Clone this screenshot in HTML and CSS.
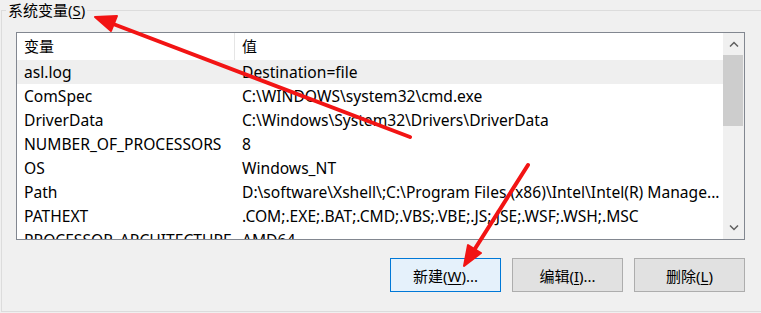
FILE: index.html
```html
<!DOCTYPE html>
<html lang="zh-CN">

<head>
	<meta charset="UTF-8">
	<title>环境变量</title>
	<link rel="stylesheet" href="styles.css">
</head>

<body>
	<fieldset class="group">
		<legend class="group-title">系统变量(<u>S</u>)</legend>
		<div class="listbox">
			<div class="list">
				<div class="row head">
					<div class="col name">变量</div>
					<div class="col value">值</div>
				</div>
				<div class="row selected">
					<div class="col name">asl.log</div>
					<div class="col value">Destination=file</div>
				</div>
				<div class="row">
					<div class="col name">ComSpec</div>
					<div class="col value">C:\WINDOWS\system32\cmd.exe</div>
				</div>
				<div class="row">
					<div class="col name">DriverData</div>
					<div class="col value">C:\Windows\System32\Drivers\DriverData</div>
				</div>
				<div class="row">
					<div class="col name">NUMBER_OF_PROCESSORS</div>
					<div class="col value">8</div>
				</div>
				<div class="row">
					<div class="col name">OS</div>
					<div class="col value">Windows_NT</div>
				</div>
				<div class="row">
					<div class="col name">Path</div>
					<div class="col value">D:\software\Xshell\;C:\Program Files (x86)\Intel\Intel(R) Manage...</div>
				</div>
				<div class="row">
					<div class="col name">PATHEXT</div>
					<div class="col value">.COM;.EXE;.BAT;.CMD;.VBS;.VBE;.JS;.JSE;.WSF;.WSH;.MSC</div>
				</div>
				<div class="row">
					<div class="col name">PROCESSOR_ARCHITECTURE</div>
					<div class="col value">AMD64</div>
				</div>
			</div>
			<div class="scrollbar">
				<div class="scroll-btn">
					<svg width="10" height="6" viewBox="0 0 10 6"><path d="M1 5.5 L5 1.5 L9 5.5" fill="none" stroke="#606060" stroke-width="1.5"/></svg>
				</div>
				<div class="track">
					<div class="thumb"></div>
				</div>
				<div class="scroll-btn">
					<svg width="10" height="6" viewBox="0 0 10 6"><path d="M1 0.5 L5 4.5 L9 0.5" fill="none" stroke="#606060" stroke-width="1.5"/></svg>
				</div>
			</div>
		</div>
		<div class="buttons">
			<button class="btn default">新建(<u>W</u>)...</button>
			<button class="btn">编辑(<u>I</u>)...</button>
			<button class="btn">删除(<u>L</u>)</button>
		</div>
	</fieldset>

	<!-- red markup arrows drawn over the screenshot -->
	<svg class="marks" width="761" height="313" viewBox="0 0 761 313">
		<g stroke="#f21414" stroke-width="4" stroke-linecap="round" fill="#f21414">
			<line x1="410" y1="137" x2="108" y2="22"/>
			<polygon points="95,17 117,16 111,31" stroke-width="2" stroke-linejoin="round"/>
			<line x1="528" y1="165" x2="471" y2="255"/>
			<polygon points="464,266 481,253 468,245" stroke-width="2" stroke-linejoin="round"/>
		</g>
	</svg>
</body>

</html>
```

FILE: styles.css
```css
body {
	margin: 0;
	width: 761px;
	height: 313px;
	overflow: hidden;
	background-color: #f0f0f0;
	font-family: "Noto Sans", "Noto Sans CJK SC", sans-serif;
	font-size: 15px;
	color: #000;
	position: relative;
}

.group {
	margin: 0 -20px 0 1px;
	padding: 0 0 19px 0;
	border: 1px solid #dcdcdc;
	min-width: 0;
}

.group-title {
	margin-left: 4px;
	padding: 0 2px;
	line-height: 20px;
	height: 20px;
}

.group-title u,
.btn u {
	text-underline-offset: 2px;
}

.listbox {
	margin: 12px 0 0 14px;
	width: 727px;
	height: 206px;
	border: 1px solid #828790;
	background-color: #fff;
	display: flex;
	overflow: hidden;
}

.list {
	flex: 1;
	overflow: hidden;
	font-size: 15.6px;
}

.row {
	display: flex;
	height: 24px;
	line-height: 24px;
	white-space: nowrap;
}

.row.head {
	height: 27px;
	line-height: 27px;
	font-size: 15px;
}

.row.selected {
	background-color: #efefef;
}

.col {
	padding-left: 7px;
	overflow: hidden;
}

.col.name {
	width: 211px;
	flex: none;
}

.head .col.name {
	border-right: 1px solid #e5e5e5;
	width: 210px;
}

.col.value {
	flex: 1;
}

.scrollbar {
	width: 21px;
	flex: none;
	background-color: #f0f0f0;
	display: flex;
	flex-direction: column;
}

.scroll-btn {
	height: 22px;
	display: flex;
	justify-content: center;
	align-items: center;
}

.track {
	flex: 1;
}

.thumb {
	height: 71px;
	margin: 0 1px 0 0;
	background-color: #cdcdcd;
}

.buttons {
	margin: 18px 0 0 14px;
	width: 729px;
	display: flex;
	justify-content: flex-end;
	gap: 11px;
}

.btn {
	width: 111px;
	height: 34px;
	margin: 0;
	padding: 0;
	border: 1px solid #adadad;
	background-color: #e1e1e1;
	font-family: inherit;
	font-size: 15px;
	color: #000;
}

.btn.default {
	border-color: #0078d7;
	background-color: #e5f1fb;
}

.marks {
	position: absolute;
	left: 0;
	top: 0;
	pointer-events: none;
}
```
